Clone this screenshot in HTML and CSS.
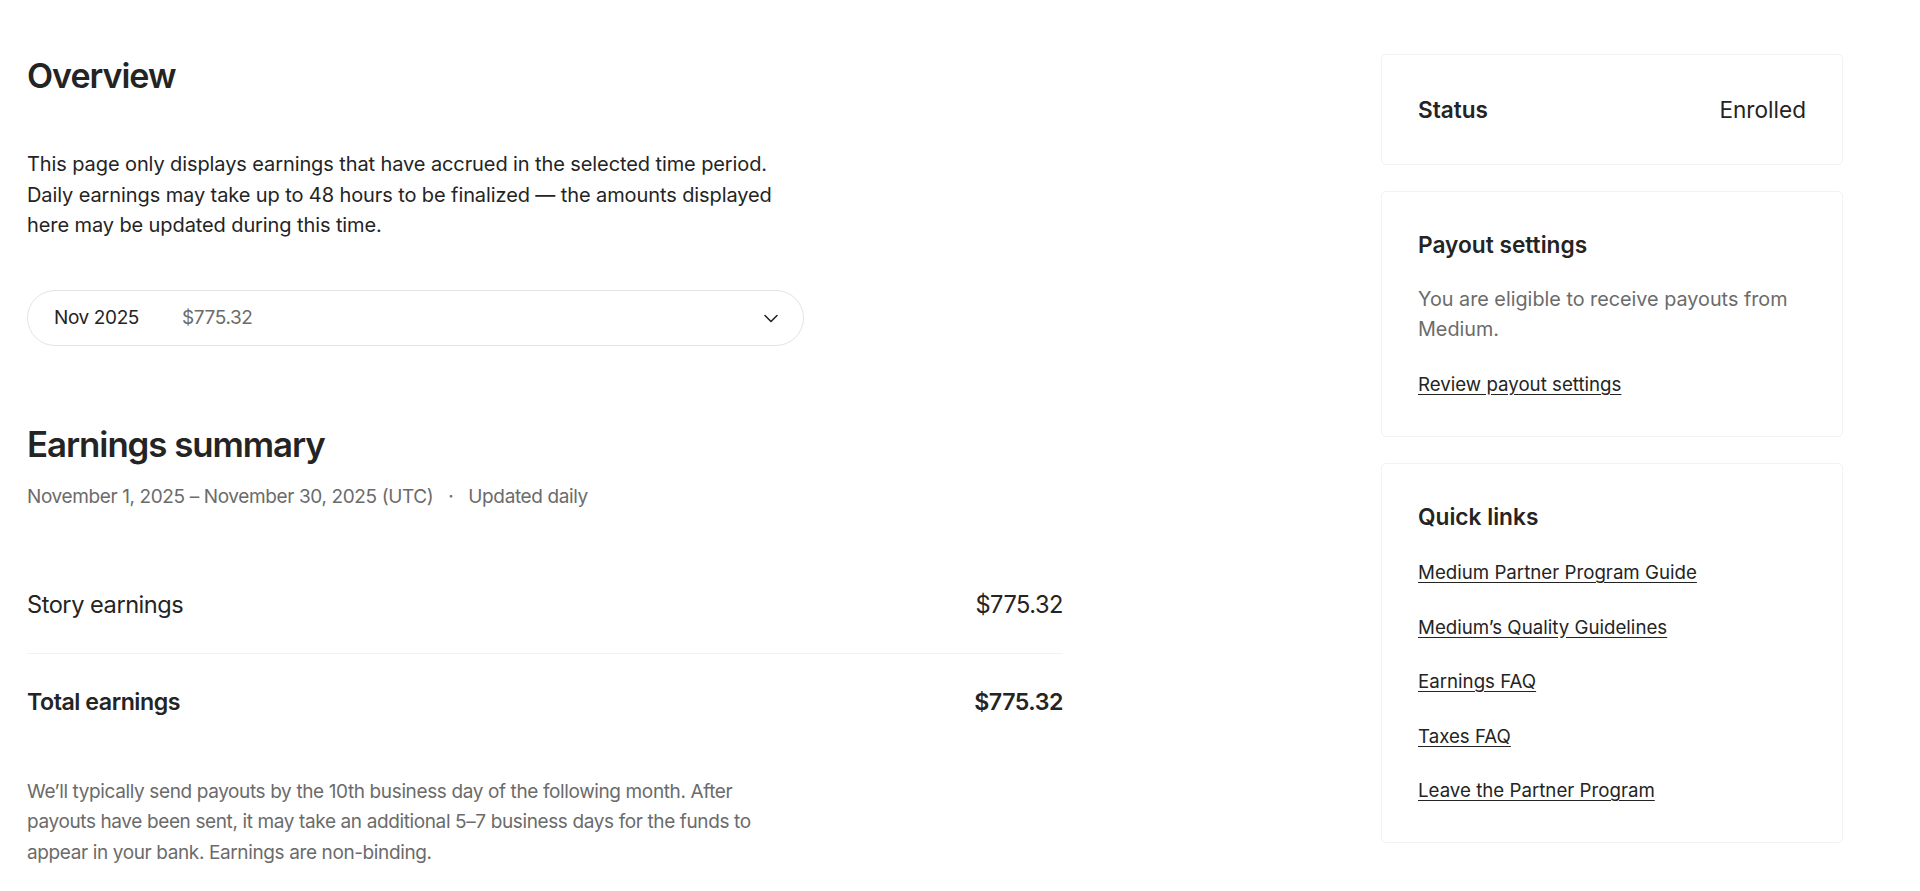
FILE: index.html
```html
<!DOCTYPE html>
<html lang="en">
<head>
    <meta charset="UTF-8">
    <meta name="viewport" content="width=device-width, initial-scale=1.0">
    <title>Partner Program Earnings</title>
    <link rel="stylesheet" href="styles.css">
</head>
<body>
    <div class="page">
        <main class="main">
            <h1 class="title">Overview</h1>
            <p class="intro">This page only displays earnings that have accrued in the selected time period. Daily earnings may take up to 48 hours to be finalized — the amounts displayed here may be updated during this time.</p>

            <button class="period-select" type="button">
                <span class="period-month">Nov 2025</span>
                <span class="period-amount">$775.32</span>
                <svg class="chevron" width="18" height="18" viewBox="0 0 18 18" fill="none">
                    <path d="M3 6.5l6 6 6-6" stroke="#242424" stroke-width="1.6" stroke-linecap="round" stroke-linejoin="round"/>
                </svg>
            </button>

            <h2 class="title summary-title">Earnings summary</h2>
            <div class="summary-meta">
                <span>November 1, 2025 – November 30, 2025 (UTC)</span>
                <span class="dot">·</span>
                <span>Updated daily</span>
            </div>

            <div class="earnings">
                <div class="earnings-row">
                    <span>Story earnings</span>
                    <span>$775.32</span>
                </div>
                <div class="earnings-row total">
                    <span>Total earnings</span>
                    <span>$775.32</span>
                </div>
            </div>

            <p class="note">We’ll typically send payouts by the 10th business day of the following month. After payouts have been sent, it may take an additional 5–7 business days for the funds to appear in your bank. Earnings are non-binding.</p>
        </main>

        <aside class="sidebar">
            <div class="card status-card">
                <span class="card-label">Status</span>
                <span class="status-value">Enrolled</span>
            </div>

            <div class="card">
                <h3 class="card-title">Payout settings</h3>
                <p class="card-text">You are eligible to receive payouts from Medium.</p>
                <a class="card-link" href="#">Review payout settings</a>
            </div>

            <div class="card">
                <h3 class="card-title">Quick links</h3>
                <ul class="link-list">
                    <li><a class="card-link" href="#">Medium Partner Program Guide</a></li>
                    <li><a class="card-link" href="#">Medium’s Quality Guidelines</a></li>
                    <li><a class="card-link" href="#">Earnings FAQ</a></li>
                    <li><a class="card-link" href="#">Taxes FAQ</a></li>
                    <li><a class="card-link" href="#">Leave the Partner Program</a></li>
                </ul>
            </div>
        </aside>
    </div>
</body>
</html>
```

FILE: styles.css
```css
body {
    margin: 0;
    font-family: Inter, "Noto Sans", sans-serif;
    color: #242424;
    background: #fff;
}
.page {
    display: flex;
    padding: 54px 77px 0 27px;
}
.main {
    width: 1036px;
}
.title {
    margin: 0;
    font-size: 34px;
    line-height: 44px;
    font-weight: 600;
    letter-spacing: -0.03em;
}
.intro {
    margin: 51px 0 0;
    max-width: 776px;
    font-size: 20px;
    line-height: 30.5px;
    letter-spacing: -0.005em;
}
.period-select {
    display: flex;
    align-items: center;
    width: 777px;
    height: 56px;
    margin-top: 49px;
    padding: 0 23px 0 26px;
    border: 1px solid #e3e3e3;
    border-radius: 28px;
    background: #fff;
    font-family: inherit;
    font-size: 19px;
    letter-spacing: -0.02em;
    cursor: pointer;
}
.period-month {
    color: #242424;
    width: 128px;
    text-align: left;
}
.period-amount {
    color: #6b6b6b;
}
.chevron {
    margin-left: auto;
}
.summary-title {
    margin-top: 76px;
    font-size: 34.8px;
}
.summary-meta {
    margin-top: 17px;
    font-size: 19px;
    line-height: 28px;
    color: #6b6b6b;
    letter-spacing: -0.02em;
}
.summary-meta .dot {
    margin: 0 10px;
}
.earnings {
    margin-top: 46px;
}
.earnings-row {
    display: flex;
    justify-content: space-between;
    padding: 33px 0;
    font-size: 23.6px;
    line-height: 30px;
    letter-spacing: -0.02em;
}
.earnings-row + .earnings-row {
    border-top: 1px solid #f2f2f2;
}
.earnings-row.total {
    font-weight: 600;
    font-size: 23.2px;
}
.note {
    margin: 27px 0 0;
    max-width: 760px;
    font-size: 19px;
    line-height: 30.6px;
    color: #6b6b6b;
    letter-spacing: -0.02em;
}
.sidebar {
    width: 462px;
    margin-left: auto;
    display: flex;
    flex-direction: column;
    gap: 26px;
}
.card {
    border: 1px solid #f2f2f2;
    border-radius: 5px;
    padding: 38px 36px 36px;
}
.status-card {
    display: flex;
    justify-content: space-between;
    padding: 40px 36px 40px;
    font-size: 22.6px;
    line-height: 29px;
}
.card-label {
    font-weight: 600;
}
.card-title {
    margin: 0;
    font-size: 22.7px;
    line-height: 30px;
    font-weight: 600;
}
.card-text {
    margin: 24px 0 0;
    font-size: 19.8px;
    line-height: 30px;
    color: #6b6b6b;
}
.card-link {
    display: inline-block;
    margin-top: 26px;
    font-size: 18.7px;
    line-height: 30px;
    color: #242424;
    text-decoration: underline;
    text-underline-offset: 3px;
}
.link-list {
    list-style: none;
    margin: 26px 0 0;
    padding: 0;
    display: flex;
    flex-direction: column;
    gap: 24.5px;
}
.link-list .card-link {
    margin-top: 0;
}
```
